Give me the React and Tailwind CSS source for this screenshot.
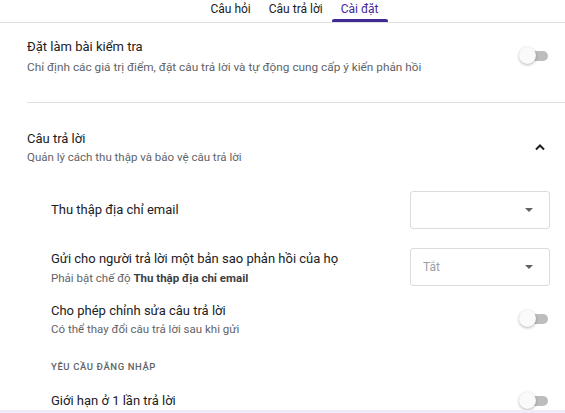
import React from "react";

const Toggle = () => (
  <div className="relative w-[32px] h-[18px] shrink-0">
    <div className="absolute left-[10px] top-[4px] w-[20px] h-[10px] rounded-full bg-[#bdbdbd]" />
    <div className="absolute left-[1px] top-0 w-[17px] h-[17px] rounded-full bg-[#fafafa] shadow-[0_1px_3px_rgba(0,0,0,0.3)]" />
  </div>
);

const Caret = () => (
  <svg width="8" height="4" viewBox="0 0 8 4" className="shrink-0">
    <path d="M0 0 L8 0 L4 4 Z" fill="#5f6368" />
  </svg>
);

const Select = ({ value }) => (
  <div className="w-[140px] h-[38px] shrink-0 border border-[#dadce0] rounded-[3px] flex items-center justify-between pl-[12px] pr-[16px]">
    <span className="text-[12px] text-[#9aa0a6]">{value}</span>
    <Caret />
  </div>
);

const tabs = ["Câu hỏi", "Câu trả lời", "Cài đặt"];

const App = () => {
  return (
    <div
      className="h-[413px] w-[565px] overflow-hidden bg-[#f0ebf8]"
      style={{ fontFamily: "Roboto, 'Liberation Sans', sans-serif" }}
    >
      <div className="h-[410px] bg-white overflow-hidden">
        {/* tabs */}
        <div className="flex justify-center pl-[24px] border-b border-[#e0e0e0] h-[23px]">
          {tabs.map((t, i) => (
            <div key={t} className="relative px-[9px] h-[22px] flex items-start pt-[1px]">
              <span className={`text-[12px] leading-[16px] ${i === 2 ? "text-[#4527a0]" : "text-[#202124]"}`}>
                {t}
              </span>
              {i === 2 && (
                <div className="absolute left-0 right-0 bottom-0 h-[3px] bg-[#3f2a94] rounded-t-[2px]" />
              )}
            </div>
          ))}
        </div>

        {/* quiz */}
        <div className="pl-[27px] pr-[15px] pt-[14px] pb-[27px] flex items-center justify-between">
          <div>
            <div className="text-[13px] leading-[20px] text-[#202124]">Đặt làm bài kiểm tra</div>
            <div className="mt-[2px] text-[11.8px] leading-[16px] text-[#5f6368]">
              Chỉ định các giá trị điểm, đặt câu trả lời và tự động cung cấp ý kiến phản hồi
            </div>
          </div>
          <Toggle />
        </div>
        <div className="ml-[27px] border-t border-[#e0e0e0]" />

        {/* responses */}
        <div className="pl-[27px] pr-[15px] pt-[26px]">
          <div className="flex items-center justify-between">
            <div>
              <div className="text-[13px] leading-[20px] text-[#202124]">Câu trả lời</div>
              <div className="text-[11.5px] leading-[16px] text-[#5f6368]">
                Quản lý cách thu thập và bảo vệ câu trả lời
              </div>
            </div>
            <svg width="12" height="8" viewBox="0 0 12 8" className="mr-[4px]">
              <path d="M2 6.5 L6 2.5 L10 6.5" stroke="#202124" strokeWidth="2" fill="none" />
            </svg>
          </div>

          <div className="pl-[24px]">
            <div className="mt-[26px] flex items-center justify-between">
              <div className="text-[13px] leading-[20px] text-[#202124]">Thu thập địa chỉ email</div>
              <Select value="" />
            </div>

            <div className="mt-[19px] flex items-start justify-between">
              <div className="pt-[1px]">
                <div className="text-[13px] leading-[20px] text-[#202124]">
                  Gửi cho người trả lời một bản sao phản hồi của họ
                </div>
                <div className="mt-[1px] text-[11.5px] leading-[16px] text-[#5f6368]">
                  Phải bật chế độ <span className="font-bold text-[#3c4043]">Thu thập địa chỉ email</span>
                </div>
              </div>
              <Select value="Tắt" />
            </div>

            <div className="mt-[15px] flex items-center justify-between">
              <div>
                <div className="text-[13px] leading-[20px] text-[#202124]">Cho phép chỉnh sửa câu trả lời</div>
                <div className="text-[11.5px] leading-[16px] text-[#5f6368]">
                  Có thể thay đổi câu trả lời sau khi gửi
                </div>
              </div>
              <Toggle />
            </div>

            <div className="mt-[23px] text-[9.5px] leading-[14px] font-medium tracking-[0.6px] text-[#5f6368]">
              YÊU CẦU ĐĂNG NHẬP
            </div>

            <div className="mt-[17px] flex items-center justify-between">
              <div className="text-[13px] leading-[20px] text-[#202124]">Giới hạn ở 1 lần trả lời</div>
              <Toggle />
            </div>
          </div>
        </div>
      </div>
    </div>
  );
};

export default App;
